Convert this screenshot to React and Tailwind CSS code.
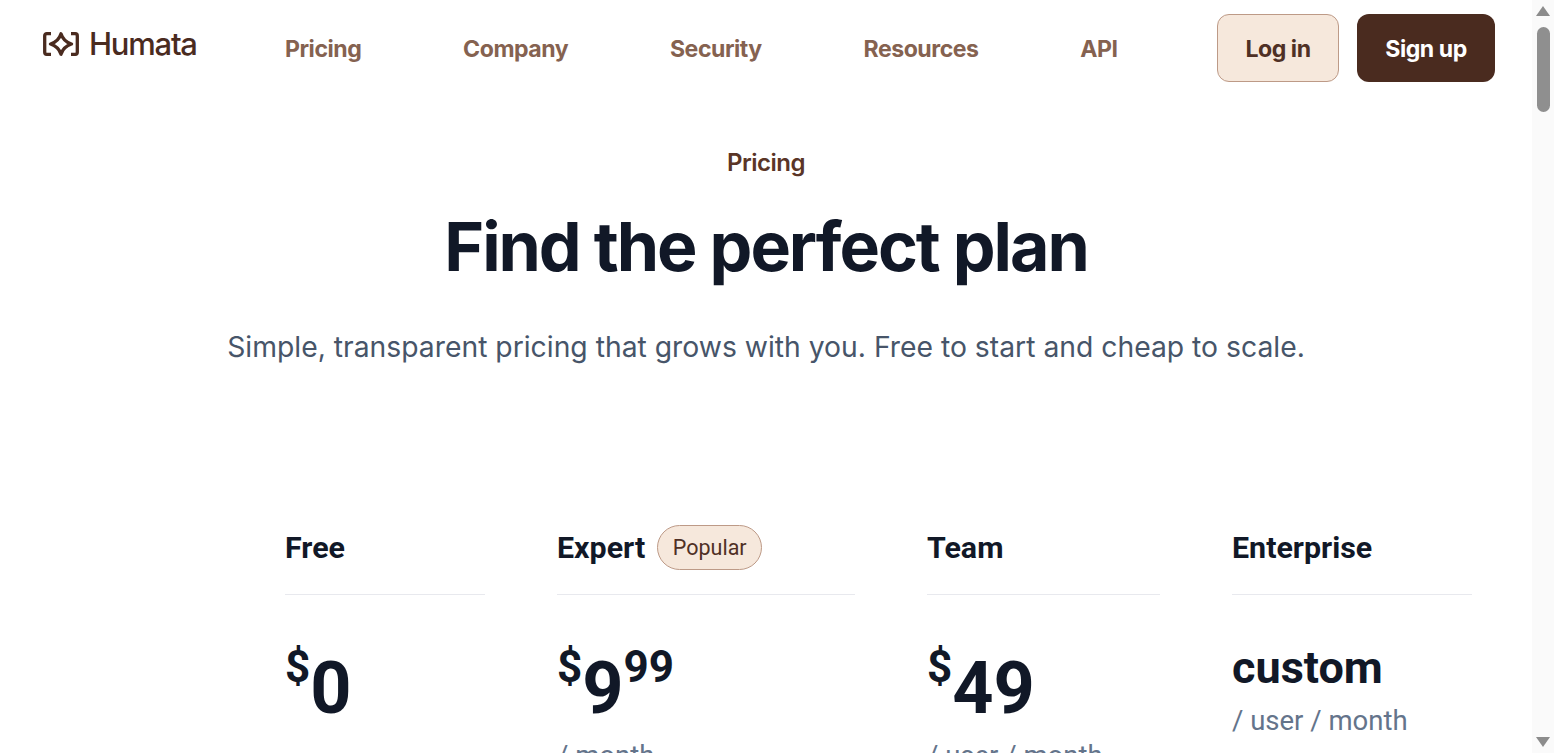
const sans = "font-['Inter','Liberation_Sans',sans-serif]";
const rob = "font-['Roboto','Liberation_Sans',sans-serif]";

function Logo() {
  return (
    <svg width="36" height="24" viewBox="0 0 36 24" fill="none" stroke="#4a2b1f" strokeWidth="3.3" className="shrink-0">
      <path d="M8 1.700H3.700a2 2 0 0 0-2 2v16.600a2 2 0 0 0 2 2H8" />
      <path d="M28 1.700h4.300a2 2 0 0 1 2 2v16.600a2 2 0 0 1-2 2H28" />
      <path d="M18 1.700C19.500 6.500 23.500 10.500 28.500 12C23.500 13.500 19.500 17.500 18 22.300C16.500 17.500 12.500 13.500 7.500 12C12.500 10.500 16.500 6.500 18 1.700Z" strokeLinejoin="round" />
    </svg>
  );
}

function Plan({ className, name, badge, price, sup, note, custom }) {
  return (
    <div className={className}>
      <div className="flex h-[70px] items-start gap-[12px] border-b border-[#e8e9ee]">
        <span className="text-[30.400px] leading-[46px] font-bold text-[#111827]">{name}</span>
        {badge && (
          <span className="flex h-[45px] w-[105px] items-center justify-center rounded-full border border-[#bd9a87] bg-[#f6e8dc] pt-[2px] text-[21.500px] text-[#4f3025]">
            {badge}
          </span>
        )}
      </div>
      {custom ? (
        <div className="mt-[43px]">
          <div className="text-[45px] leading-[60px] font-bold text-[#111827]">custom</div>
          <div className="mt-[5px] text-[27.500px] leading-[36px] text-[#64748b]">{note}</div>
        </div>
      ) : (
        <div className="mt-[46px]">
          <div className="flex h-[90px] items-start font-bold text-[#111827]">
            <span className="text-[44px] leading-[52px]">$</span>
            <span className="mt-[6px] text-[72px] leading-[84px]">{price}</span>
            {sup && <span className="text-[44px] leading-[52px]">{sup}</span>}
          </div>
          {note && <div className="mt-[7px] text-[27.500px] leading-[36px] text-[#64748b]">{note}</div>}
        </div>
      )}
    </div>
  );
}

export default function App() {
  return (
    <div className="flex h-[753px] w-full overflow-hidden bg-white">
      <main className="flex-1 min-w-0">
        <header className={`${sans} flex h-[96px] items-start px-[43px] pt-[14px]`}>
          <div className="flex h-[60px] w-[242px] items-center gap-[10px]">
            <Logo />
            <span className="text-[31px] font-[550] tracking-[-0.04em] text-[#4a2b1f]">Humata</span>
          </div>
          <nav className="flex h-[70px] items-center gap-[101.700px] text-[23.100px] font-[650] tracking-[-0.02em] text-[#856250]">
            <span>Pricing</span>
            <span>Company</span>
            <span>Security</span>
            <span>Resources</span>
            <span>API</span>
          </nav>
          <div className="ml-auto mr-[-6px] flex gap-[18px] text-[23.100px] font-[650] tracking-[-0.02em]">
            <span className="flex h-[68px] w-[122px] items-center justify-center rounded-[12px] border border-[#bd9a87] bg-[#f6e8dc] pt-[2px] text-[#4f3025]">Log in</span>
            <span className="flex h-[68px] w-[138px] items-center justify-center rounded-[12px] bg-[#4a2b1f] pt-[2px] text-white">Sign up</span>
          </div>
        </header>
        <section className={`${sans} text-center`}>
          <p className="mt-[53px] text-[24px] leading-[28px] font-semibold tracking-[-0.02em] text-[#5a3527]">Pricing</p>
          <h1 className="mt-[29px] text-[68px] leading-[80px] font-bold tracking-[-0.03em] text-[#111827]">Find the perfect plan</h1>
          <p className="mt-[41px] text-[28.300px] leading-[40px] text-[#475569]">Simple, transparent pricing that grows with you. Free to start and cheap to scale.</p>
        </section>
        <section className={`${rob} ml-[285px] mt-[158px] flex gap-[72px]`}>
          <Plan className="w-[200px]" name="Free" price="0" />
          <Plan className="w-[298px]" name="Expert" badge="Popular" price="9" sup="99" note="/ month" />
          <Plan className="w-[233px]" name="Team" price="49" note="/ user / month" />
          <Plan className="w-[240px]" name="Enterprise" custom note="/ user / month" />
        </section>
      </main>
      <aside className="flex w-[22px] shrink-0 flex-col items-center bg-[#fafafa] py-[6px]">
        <div className="h-0 w-0 border-x-[7px] border-b-[10px] border-x-transparent border-b-[#8c8c8c]" />
        <div className="mt-[11px] h-[85px] w-[13px] rounded-full bg-[#8f8f8f]" />
        <div className="mt-auto h-0 w-0 border-x-[7px] border-t-[10px] border-x-transparent border-t-[#8c8c8c]" />
      </aside>
    </div>
  );
}
